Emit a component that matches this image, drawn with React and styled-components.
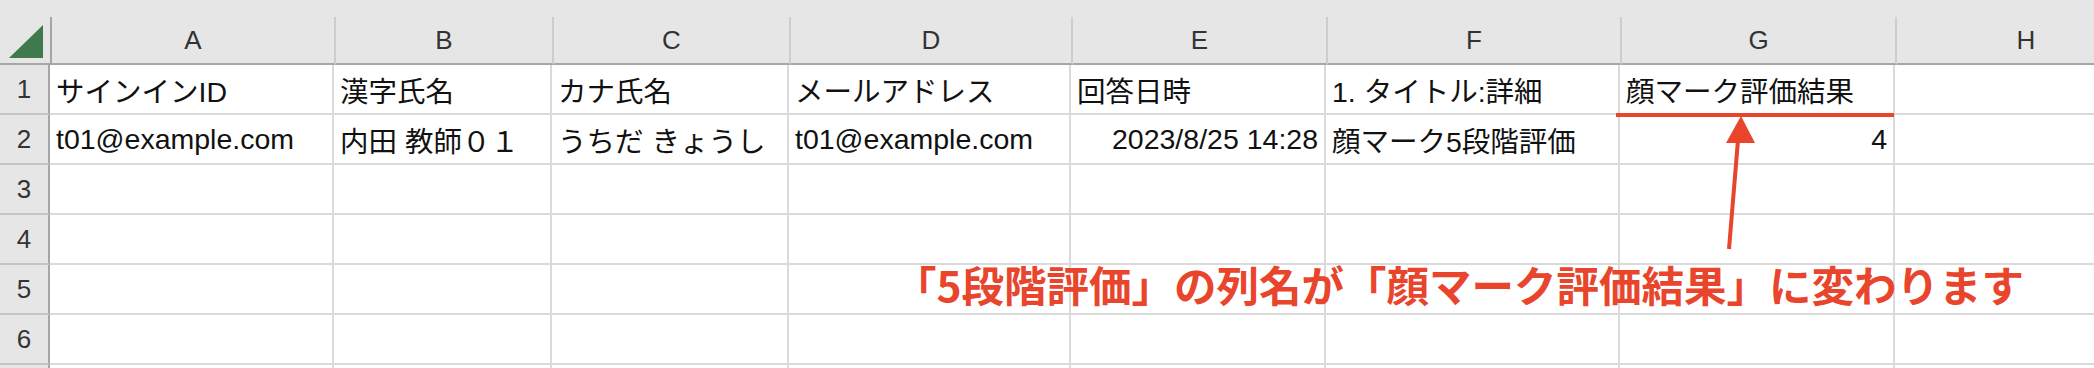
import React from "react";
import styled, { createGlobalStyle } from "styled-components";

// Column widths include the 2px right grid line
const columns = [
  { key: "A", width: 284 },
  { key: "B", width: 218 },
  { key: "C", width: 237 },
  { key: "D", width: 282 },
  { key: "E", width: 255 },
  { key: "F", width: 294 },
  { key: "G", width: 275 },
  { key: "H", width: 260 },
];

const rows = [
  ["サインインID", "漢字氏名", "カナ氏名", "メールアドレス", "回答日時", "1. タイトル:詳細", "顔マーク評価結果", ""],
  ["t01@example.com", "内田 教師０１", "うちだ きょうし", "t01@example.com", "2023/8/25 14:28", "顔マーク5段階評価", "4", ""],
  ["", "", "", "", "", "", "", ""],
  ["", "", "", "", "", "", "", ""],
  ["", "", "", "", "", "", "", ""],
  ["", "", "", "", "", "", "", ""],
];

// cells whose value is a number/date sit on the right
const rightAligned = { "1-4": true, "1-6": true };

export default function App() {
  return (
    <>
      <GlobalStyle />
      <Sheet>
        <TopStrip />
        <Row>
          <Corner>
            <svg width="50" height="48" viewBox="0 0 50 48">
              <polygon points="9,41 43,41 43,8" fill="#3f7a4c" />
            </svg>
          </Corner>
          {columns.map((c) => (
            <ColHeader key={c.key} width={c.width}>
              {c.key}
            </ColHeader>
          ))}
        </Row>
        {rows.map((r, i) => (
          <Row key={i}>
            <RowHeader>{i + 1}</RowHeader>
            {columns.map((c, j) => (
              <Cell key={c.key} width={c.width} right={rightAligned[`${i}-${j}`]}>
                {r[j]}
              </Cell>
            ))}
          </Row>
        ))}
        {/* next row only peeks in at the bottom edge */}
        <Row>
          <RowHeader />
          {columns.map((c) => (
            <Cell key={c.key} width={c.width} />
          ))}
        </Row>

        <Underline />
        <Arrow width="40" height="140" viewBox="0 0 40 140">
          <line x1="13" y1="133" x2="22" y2="24" stroke="#e8452c" strokeWidth="4" />
          <polygon points="25,0 10,27 39,27" fill="#e8452c" />
        </Arrow>
        <Note>「5段階評価」の列名が「顔マーク評価結果」に変わります</Note>
      </Sheet>
    </>
  );
}

const GlobalStyle = createGlobalStyle`
  html, body {
    margin: 0;
    padding: 0;
    background: #ffffff;
    overflow: hidden;
  }
`;

const Sheet = styled.div`
  position: relative;
  width: 2094px;
  height: 368px;
  overflow: hidden;
  background: #ffffff;
  font-family: "Liberation Sans", "Noto Sans CJK JP", sans-serif;
`;

const TopStrip = styled.div`
  height: 17px;
  background: #e6e6e6;
`;

const Row = styled.div`
  display: flex;
`;

const Corner = styled.div`
  flex: 0 0 50px;
  height: 48px;
  box-sizing: border-box;
  background: #e6e6e6;
  border-right: 2px solid #a6a6a6;
  border-bottom: 2px solid #a6a6a6;
  svg {
    display: block;
  }
`;

const ColHeader = styled.div`
  flex: 0 0 ${(p) => p.width}px;
  height: 48px;
  box-sizing: border-box;
  background: #e6e6e6;
  border-right: 2px solid #cdcdcd;
  border-bottom: 2px solid #a6a6a6;
  display: flex;
  align-items: center;
  justify-content: center;
  font-size: 26px;
  color: #333333;
`;

const RowHeader = styled.div`
  flex: 0 0 50px;
  height: 50px;
  box-sizing: border-box;
  background: #e6e6e6;
  border-right: 2px solid #a6a6a6;
  border-bottom: 2px solid #c4c4c4;
  display: flex;
  align-items: center;
  justify-content: center;
  font-size: 26px;
  color: #333333;
`;

const Cell = styled.div`
  flex: 0 0 ${(p) => p.width}px;
  height: 50px;
  box-sizing: border-box;
  border-right: 2px solid #dadada;
  border-bottom: 2px solid #dadada;
  display: flex;
  align-items: center;
  justify-content: ${(p) => (p.right ? "flex-end" : "flex-start")};
  padding: 0 6px;
  font-size: 28.5px;
  color: #111111;
  white-space: nowrap;
  overflow: hidden;
`;

const Underline = styled.div`
  position: absolute;
  left: 1616px;
  top: 113px;
  width: 278px;
  height: 4px;
  background: #e8452c;
`;

const Arrow = styled.svg`
  position: absolute;
  left: 1716px;
  top: 116px;
`;

const Note = styled.div`
  position: absolute;
  left: 894px;
  top: 261px;
  font-family: "Noto Sans CJK JP", sans-serif;
  font-weight: 700;
  font-size: 42.5px;
  line-height: 46px;
  color: #e8452c;
  white-space: nowrap;
`;
